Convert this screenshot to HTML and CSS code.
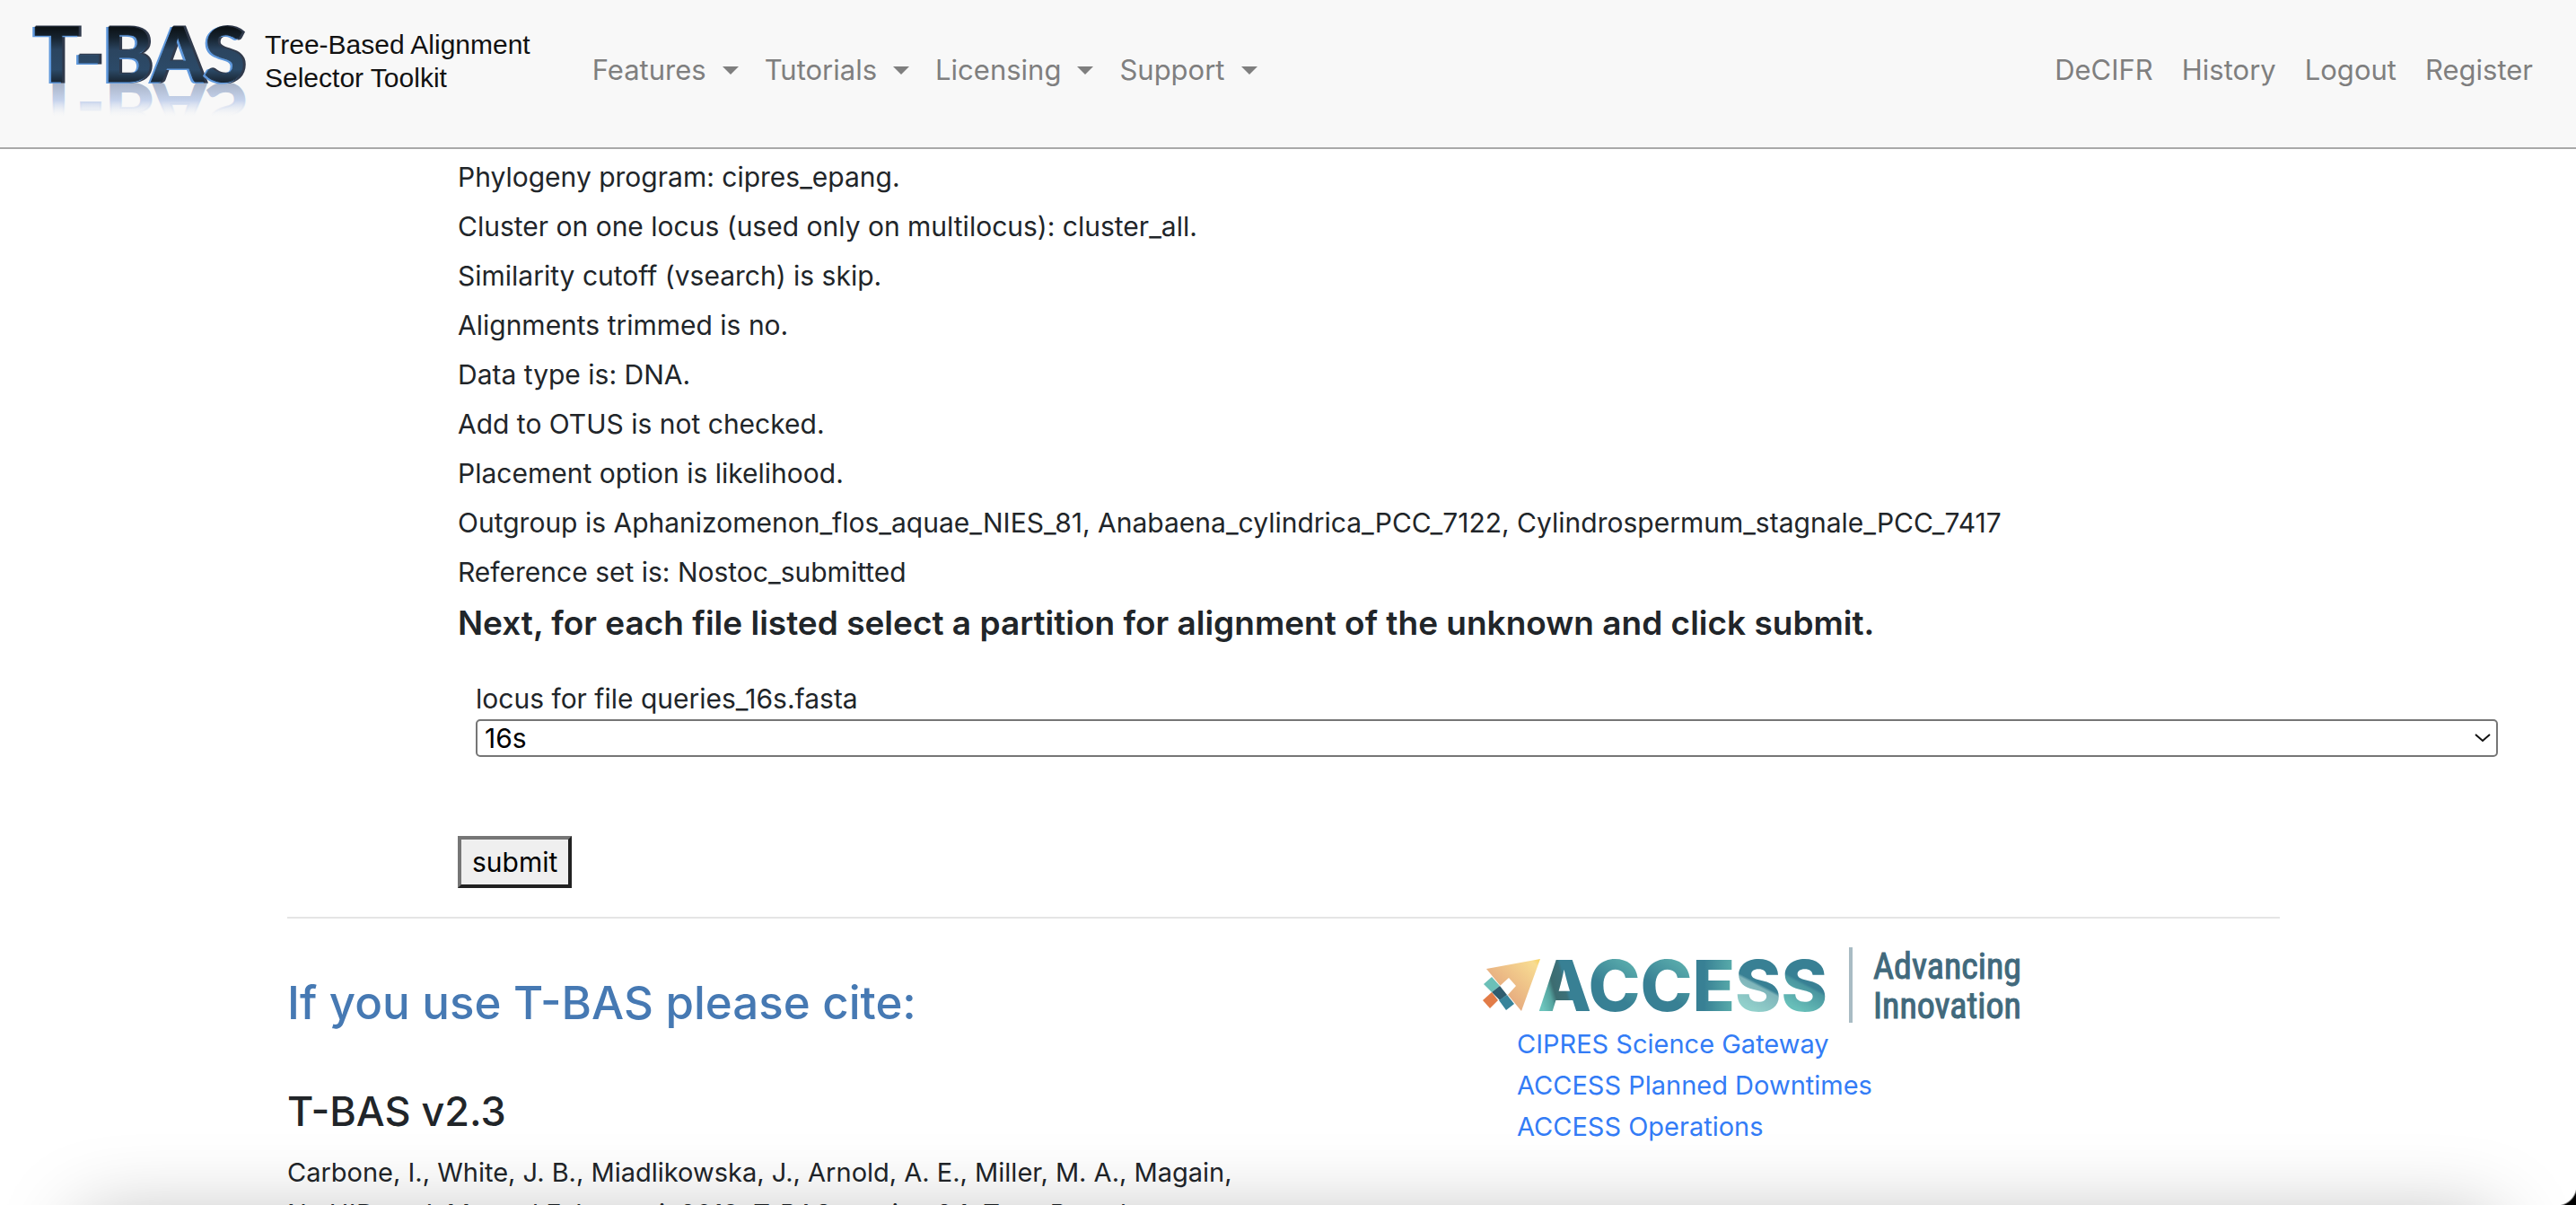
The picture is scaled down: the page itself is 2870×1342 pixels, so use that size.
FILE: index.html
```html
<!DOCTYPE html>
<html lang="en">
<head>
<meta charset="utf-8">
<title>T-BAS</title>
<link rel="stylesheet" href="styles.css">
</head>
<body>
<header class="navbar">
  <a class="brand" href="#">
    <svg class="brand-logo" viewBox="0 0 240 104" role="img" aria-label="T-BAS">
      <defs>
        <linearGradient id="steel" gradientUnits="userSpaceOnUse" x1="0" y1="4" x2="0" y2="66">
          <stop offset="0" stop-color="#0c1217"/><stop offset=".18" stop-color="#16232f"/><stop offset=".4" stop-color="#2b4560"/><stop offset=".75" stop-color="#2c4a68"/><stop offset="1" stop-color="#17222d"/>
        </linearGradient>
        <linearGradient id="mirror" gradientUnits="userSpaceOnUse" x1="0" y1="65" x2="0" y2="27">
          <stop offset="0" stop-color="#a9b4c8"/><stop offset=".5" stop-color="#c6d3ec"/><stop offset="1" stop-color="#f8f8f8" stop-opacity="0"/>
        </linearGradient>
      </defs>
      <text class="logo-text" x="0" y="65" fill="url(#mirror)" stroke="url(#mirror)" stroke-width="2" transform="matrix(1 0 0 -1 4 131)" aria-hidden="true">T-BAS</text>
      <text class="logo-text" x="4" y="64" fill="#303a4c" stroke="#303a4c" stroke-width="3" aria-hidden="true">T-BAS</text>
      <text class="logo-text" x="0" y="65" fill="#5f98dc" stroke="#5f98dc" stroke-width="2" aria-hidden="true">T-BAS</text>
      <text class="logo-text" x="2" y="64" fill="url(#steel)" stroke="url(#steel)" stroke-width="1">T-BAS</text>
    </svg>
    <span class="brand-name">Tree-Based Alignment<br>Selector Toolkit</span>
  </a>
  <nav class="menu" aria-label="Main">
    <button class="menu-item" type="button">Features<span class="caret"></span></button>
    <button class="menu-item" type="button">Tutorials<span class="caret"></span></button>
    <button class="menu-item" type="button">Licensing<span class="caret"></span></button>
    <button class="menu-item" type="button">Support<span class="caret"></span></button>
  </nav>
  <nav class="account" aria-label="Account">
    <a href="#">DeCIFR</a>
    <a href="#">History</a>
    <a href="#">Logout</a>
    <a href="#">Register</a>
  </nav>
</header>
<main class="summary">
  <p>Phylogeny program: cipres_epang.</p>
  <p>Cluster on one locus (used only on multilocus): cluster_all.</p>
  <p>Similarity cutoff (vsearch) is skip.</p>
  <p>Alignments trimmed is no.</p>
  <p>Data type is: DNA.</p>
  <p>Add to OTUS is not checked.</p>
  <p>Placement option is likelihood.</p>
  <p>Outgroup is Aphanizomenon_flos_aquae_NIES_81, Anabaena_cylindrica_PCC_7122, Cylindrospermum_stagnale_PCC_7417</p>
  <p>Reference set is: Nostoc_submitted</p>
  <h1 class="prompt">Next, for each file listed select a partition for alignment of the unknown and click submit.</h1>
  <form class="locus-form">
    <div class="field">
      <label for="locus">locus for file queries_16s.fasta</label>
      <div class="select-wrap">
        <select id="locus" name="locus"><option>16s</option></select>
        <svg class="chevron" viewBox="0 0 20 12" aria-hidden="true"><path d="M2 2L10 9L18 2"/></svg>
      </div>
    </div>
    <button class="submit" type="submit">submit</button>
  </form>
</main>
<footer class="footer">
  <section class="cite">
    <h2>If you use T-BAS please cite:</h2>
    <h3>T-BAS v2.3</h3>
    <p>Carbone, I., White, J. B., Miadlikowska, J., Arnold, A. E., Miller, M. A., Magain, N., U'Ren, J. M., and F. Lutzoni. 2019. T-BAS version 2.1: Tree-Based</p>
  </section>
  <section class="access">
    <svg class="access-logo" viewBox="0 0 606 88" role="img" aria-label="ACCESS Advancing Innovation">
      <defs>
        <linearGradient id="gold" x1="0" y1="1" x2="1" y2="0"><stop offset=".2" stop-color="#e3a27c"/><stop offset=".9" stop-color="#f8dc92"/><stop offset="1" stop-color="#f8cf56"/></linearGradient>
        <linearGradient id="letter-a" gradientUnits="userSpaceOnUse" x1="66" y1="60" x2="122" y2="44"><stop offset="0" stop-color="#6cc4bc"/><stop offset=".2" stop-color="#55a5a0"/><stop offset=".3" stop-color="#3c6c70"/><stop offset=".5" stop-color="#3c7078"/><stop offset=".56" stop-color="#388094"/></linearGradient>
        <linearGradient id="letter-c" gradientUnits="userSpaceOnUse" x1="136" y1="60" x2="170" y2="14"><stop offset=".2" stop-color="#388094"/><stop offset="1" stop-color="#5fb3b0"/></linearGradient>
        <linearGradient id="letter-c2" gradientUnits="userSpaceOnUse" x1="193" y1="60" x2="227" y2="14"><stop offset=".2" stop-color="#388094"/><stop offset="1" stop-color="#5fb3b0"/></linearGradient>
        <linearGradient id="letter-e" gradientUnits="userSpaceOnUse" x1="240" y1="0" x2="282" y2="0"><stop offset=".2" stop-color="#388094"/><stop offset="1" stop-color="#5aaeac"/></linearGradient>
        <linearGradient id="letter-s" gradientUnits="userSpaceOnUse" x1="294" y1="68" x2="318" y2="22"><stop offset="0" stop-color="#92d0cb"/><stop offset=".5" stop-color="#7fb5ba"/><stop offset=".56" stop-color="#388094"/></linearGradient>
        <linearGradient id="letter-s2" gradientUnits="userSpaceOnUse" x1="346" y1="68" x2="370" y2="22"><stop offset="0" stop-color="#68bfb9"/><stop offset=".5" stop-color="#4a97a0"/><stop offset=".56" stop-color="#388094"/></linearGradient>
      </defs>
      <path fill="url(#gold)" d="M6 27L66 16L45 74Z"/>
      <path fill="#fff" d="M31 37L39 46L29 57L21 46Z"/>
      <path fill="#6cc0b8" d="M12 36L21 46L12 53L3 44Z"/>
      <path fill="#2f5c6e" d="M21 46L29 56L21 62L12 53Z"/>
      <path fill="#e27c48" d="M12 53L19 62L10 71L2 62Z"/>
      <path fill="#38839a" d="M29 56L37 66L28 73L20 62Z"/>
      <text class="access-word" x="63" y="74"><tspan fill="url(#letter-a)">A</tspan><tspan fill="url(#letter-c)">C</tspan><tspan fill="url(#letter-c2)">C</tspan><tspan fill="url(#letter-e)">E</tspan><tspan fill="url(#letter-s)">S</tspan><tspan fill="url(#letter-s2)">S</tspan></text>
      <path fill="#a9bcc4" d="M410 3H414V87H410Z"/>
      <text class="access-tag" x="437" y="38">Advancing</text>
      <text class="access-tag" x="437" y="82">Innovation</text>
    </svg>
    <ul>
      <li><a href="#">CIPRES Science Gateway</a></li>
      <li><a href="#">ACCESS Planned Downtimes</a></li>
      <li><a href="#">ACCESS Operations</a></li>
    </ul>
  </section>
</footer>
<div class="dock-shadow" aria-hidden="true"></div>
<div class="window-corner" aria-hidden="true"></div>
</body>
</html>
```
FILE: styles.css
```css
* { box-sizing: border-box; }
html { overflow: hidden; }
body { margin: 0; height: 100vh; overflow: hidden; background: #fff; color: #212529; font: 30px/46px Inter, "Liberation Sans", sans-serif; }
p, h1, h2, h3, ul { margin: 0; padding: 0; }
a { text-decoration: none; }
button, select { font: inherit; }

/* Top bar */
.navbar { display: flex; align-items: flex-start; height: 166px; padding: 27px 48px 0 36px; background: #f8f8f8; border-bottom: 2px solid #a9a9a9; font-size: 31px; }
.brand { display: flex; gap: 19px; color: #111; }
.brand-logo { width: 240px; height: 104px; overflow: visible; }
.logo-text { font: 700 84px Lato, sans-serif; }
.brand-name { padding-top: 4px; font: 30px/37px "Liberation Sans", Arial, sans-serif; }
.menu { display: flex; gap: 29px; margin: 28px 0 0 69px; }
.menu-item { display: flex; align-items: center; gap: 18px; padding: 0; border: 0; background: none; color: #7f7f7f; }
.caret { border: 9px solid transparent; border-top-color: currentColor; border-bottom: 0; }
.account { display: flex; gap: 32px; margin: 28px 0 0 auto; }
.account a { color: #7f7f7f; }

/* Run summary and locus form */
.summary { padding: 8px 87px 0 510px; }
.summary p { margin-bottom: 9px; }
.prompt { font-size: 37px; font-weight: 600; line-height: 50px; }
.locus-form { padding-top: 36px; }
.field { padding-left: 20px; }
.field label { display: block; }
.select-wrap { display: grid; align-items: center; }
select { grid-area: 1 / 1; appearance: none; width: 100%; height: 42px; padding: 0 8px; border: 2px solid #767676; border-radius: 5px; background: #fff; color: #000; line-height: 36px; }
.chevron { grid-area: 1 / 1; justify-self: end; width: 20px; height: 12px; margin-right: 7px; fill: none; stroke: #111; stroke-width: 2; pointer-events: none; }
.submit { display: block; height: 58px; margin: 88px 0 32px; padding: 0 12px; border: 4px outset #767676; background: #efefef; color: #000; }

/* Citation and partner links */
.footer { display: grid; grid-template-columns: 1fr 1fr; margin: 0 330px 0 320px; border-top: 2px solid #e5e5e5; font-size: 29px; }
.cite { padding-right: 40px; }
h2 { padding-top: 60px; color: #4679b3; font-size: 51px; font-weight: 500; line-height: 68px; }
h3 { padding: 64px 0 22px; font-size: 45px; font-weight: 500; }
.access { padding: 29px 0 0 220px; }
.access-logo { display: block; width: 606px; height: 88px; }
.access-word { font: 800 78px Inter, sans-serif; }
.access-tag { fill: #41697c; stroke: #41697c; stroke-width: 1px; font: 40px "Liberation Sans Narrow", "Roboto Condensed", Roboto, sans-serif; }
.access ul { list-style: none; padding-left: 40px; }
.access a { color: #337cf6; }

/* Shade along the bottom edge of the window */
.dock-shadow { position: fixed; right: 90px; bottom: -215px; left: 90px; height: 200px; box-shadow: 0 0 90px rgba(0, 0, 0, .28); pointer-events: none; }
.window-corner { position: fixed; right: 0; bottom: 0; width: 20px; height: 20px; background: radial-gradient(circle at -2px -2px, transparent 22px, #000 24px); pointer-events: none; }
```
